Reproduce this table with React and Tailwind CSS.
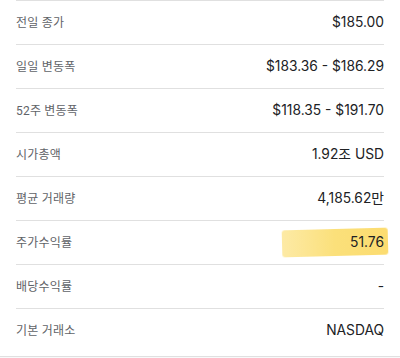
import React from "react";

const rows = [
  { label: "전일 종가", value: "$185.00" },
  { label: "일일 변동폭", value: "$183.36 - $186.29" },
  { label: "52주 변동폭", value: "$118.35 - $191.70" },
  { label: "시가총액", value: "1.92조 USD" },
  { label: "평균 거래량", value: "4,185.62만" },
  { label: "주가수익률", value: "51.76", highlight: true },
  { label: "배당수익률", value: "-" },
  { label: "기본 거래소", value: "NASDAQ" },
];

const labelFont = { fontFamily: '"Roboto", "Noto Sans CJK KR", sans-serif' };
const valueFont = { fontFamily: '"Inter", "Noto Sans CJK KR", sans-serif' };

export default function App() {
  return (
    <div className="w-[400px] h-[358px] bg-white overflow-hidden">
      <div className="px-4">
        {rows.map((r, i) => (
          <div
            key={r.label}
            className={
              "flex items-center justify-between border-t border-[#e0e0e0] " +
              (i === rows.length - 1 ? "h-[48px] pb-[4px]" : "h-[44px]")
            }
          >
            <span className="text-[12px] text-[#5f6368] tracking-[0.2px]" style={labelFont}>
              {r.label}
            </span>
            <span className="relative text-[13.8px] font-normal text-[#202124]" style={valueFont}>
              {r.highlight && (
                <span className="absolute left-[-68px] right-[-4px] top-[-3px] bottom-[-3px] -rotate-[1.5deg] rounded-[3px] bg-gradient-to-r from-[#fdeaa5] via-[#fbe07a] to-[#fcdc70] blur-[0.6px]" />
              )}
              <span className="relative">{r.value}</span>
            </span>
          </div>
        ))}
      </div>
      <div className="h-[4px] border-t border-[#e0e0e0] bg-[#f8f9fa]" />
    </div>
  );
}
